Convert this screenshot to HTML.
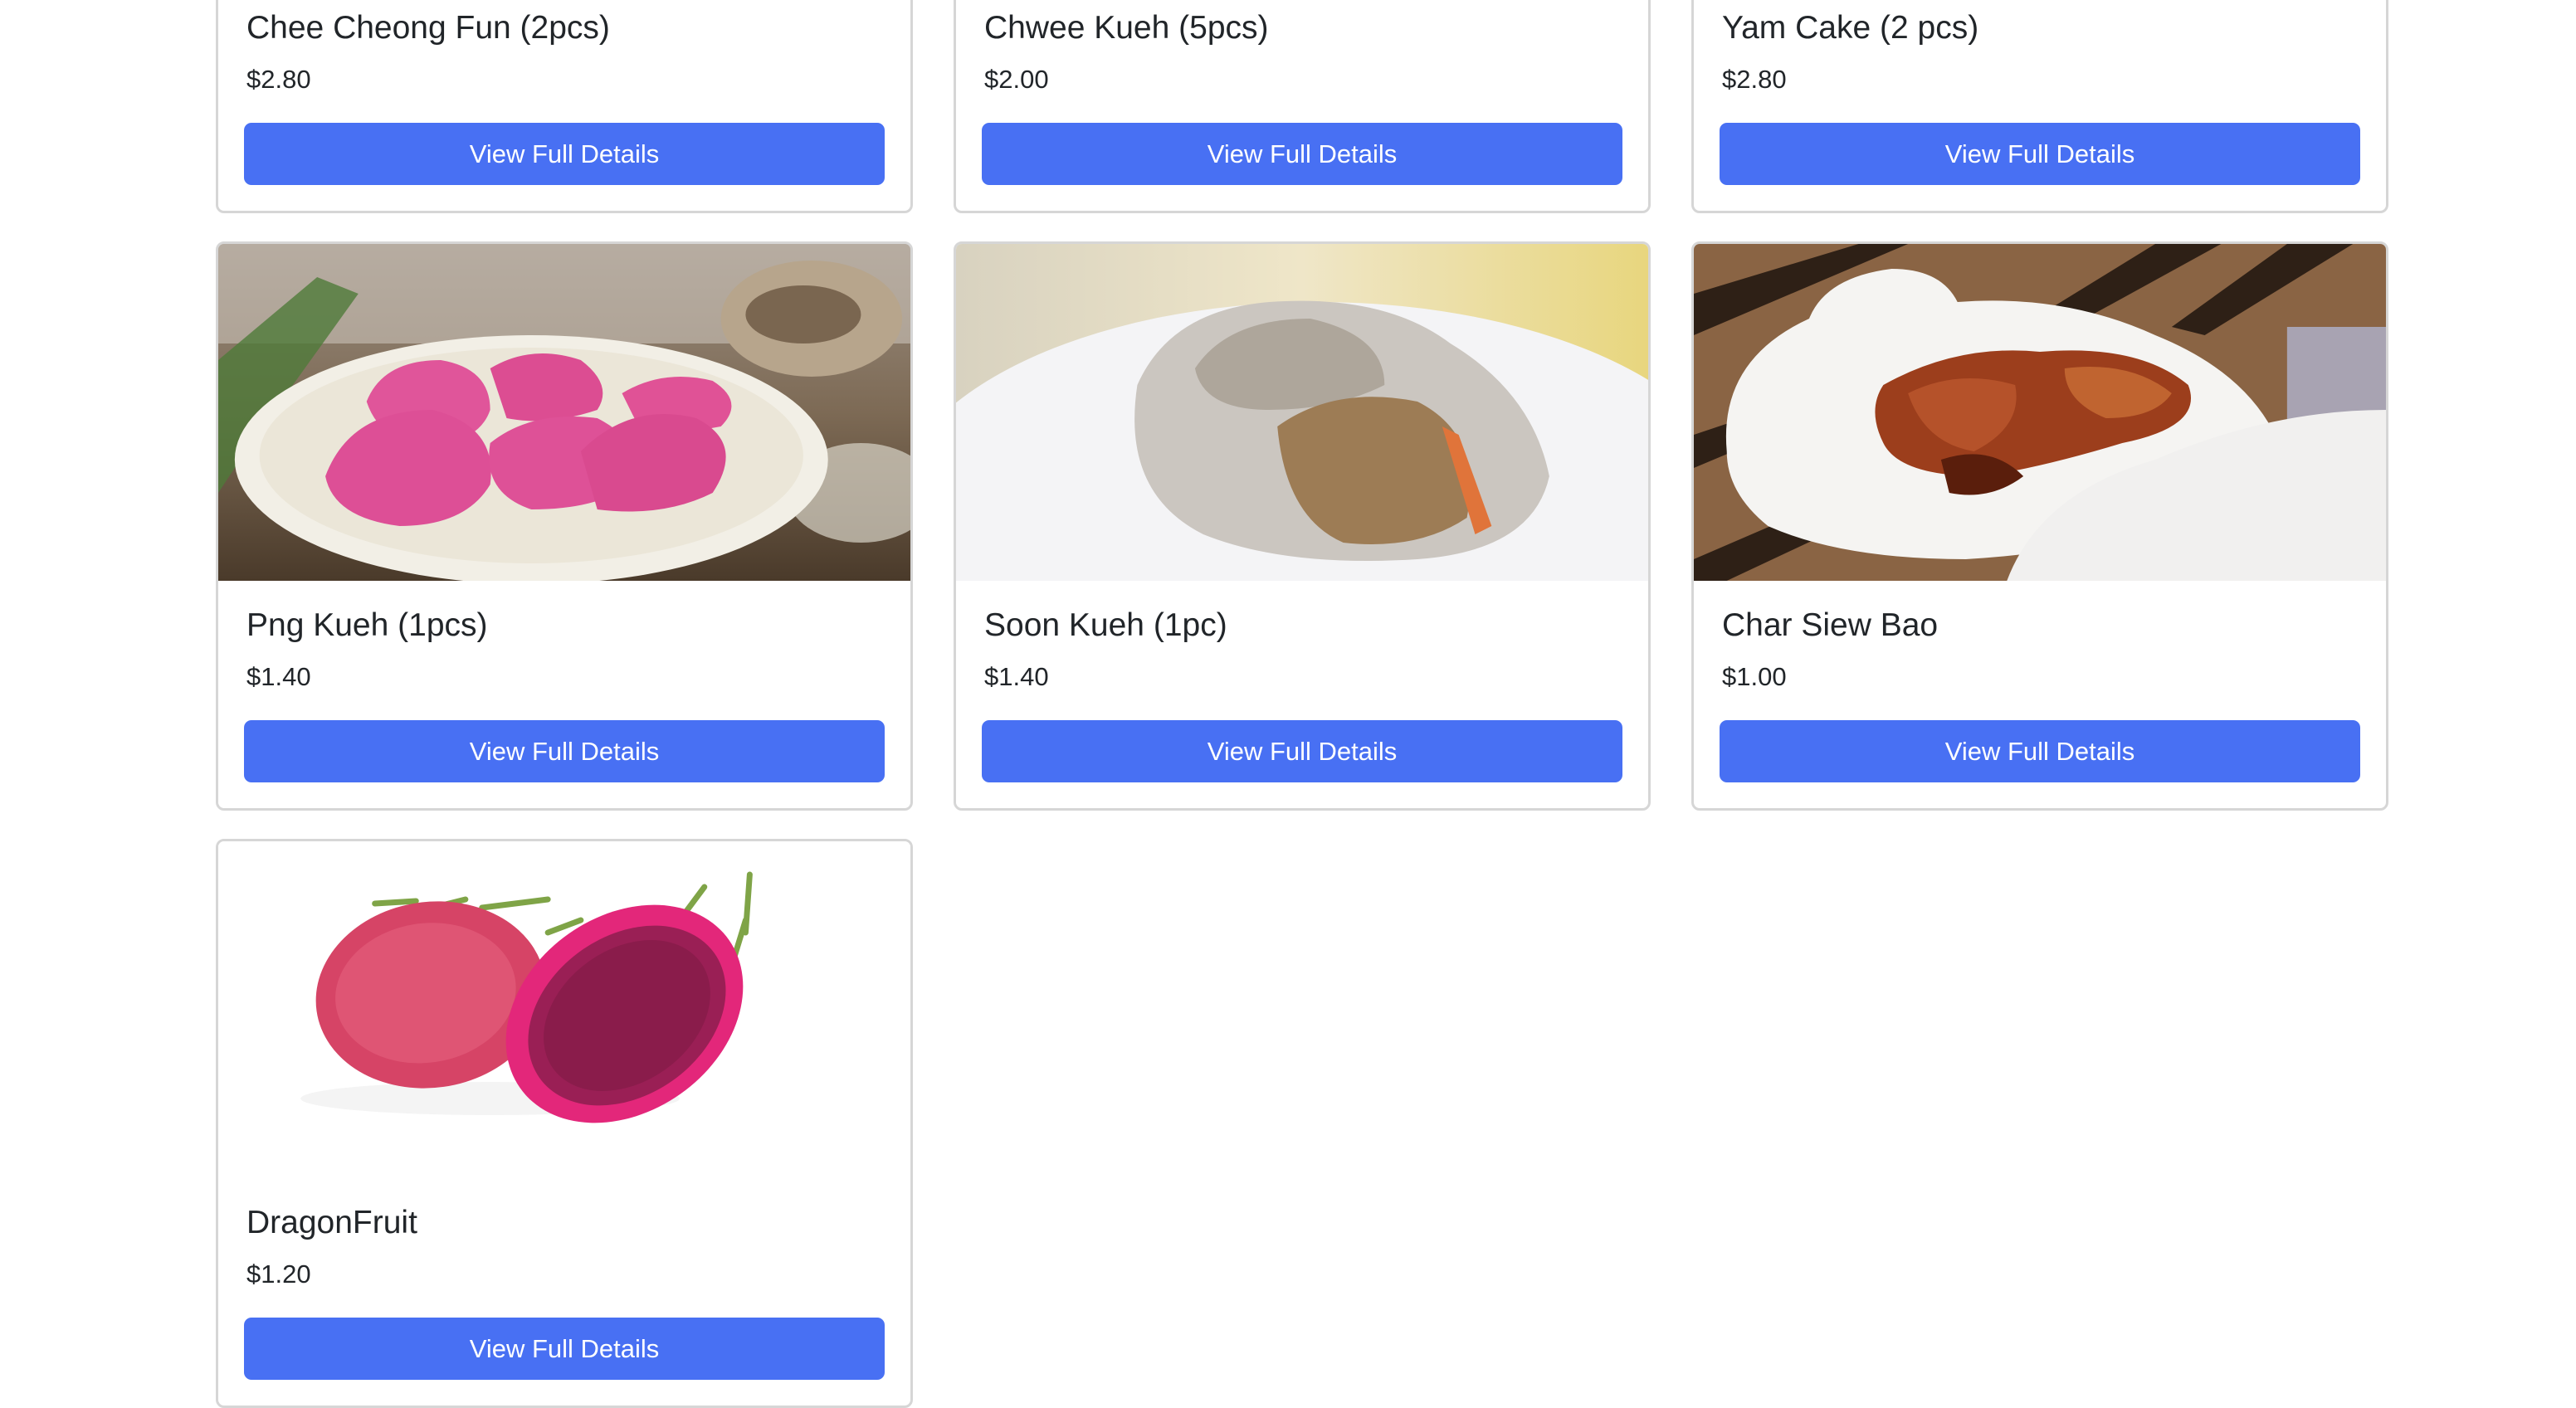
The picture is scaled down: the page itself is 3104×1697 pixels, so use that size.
<!DOCTYPE html>
<html><head><meta charset="utf-8"><style>
*{box-sizing:border-box;margin:0;padding:0}
html,body{width:3104px;height:1695px;overflow:hidden;background:#fff;font-family:"Liberation Sans",sans-serif;color:#212529}
.card{position:absolute;width:840px;height:686px;border:3px solid #d6d6d6;border-radius:10px;overflow:hidden;background:#fff}
.img{position:absolute;left:0;top:0;width:100%;height:406px}
.t{position:absolute;left:34px;top:440px;font-size:39px;line-height:40px;white-space:nowrap}
.p{position:absolute;left:34px;top:506px;font-size:31px;line-height:32px}
.b{position:absolute;left:31px;right:31px;top:574px;height:75px;background:#4870f3;border-radius:9px;color:#fff;font-size:31px;line-height:75px;text-align:center}
</style></head><body>

<div class="card" style="left:260px;top:-429px"><div class="t">Chee Cheong Fun (2pcs)</div><div class="p">$2.80</div><div class="b">View Full Details</div></div>
<div class="card" style="left:1149px;top:-429px"><div class="t">Chwee Kueh (5pcs)</div><div class="p">$2.00</div><div class="b">View Full Details</div></div>
<div class="card" style="left:2038px;top:-429px"><div class="t">Yam Cake (2 pcs)</div><div class="p">$2.80</div><div class="b">View Full Details</div></div>

<div class="card" style="left:260px;top:291px">
<svg class="img" viewBox="0 0 840 406" preserveAspectRatio="none">
<defs><linearGradient id="g1" x1="0" y1="0" x2="0" y2="1"><stop offset="0" stop-color="#9a8d80"/><stop offset=".5" stop-color="#7d6a55"/><stop offset="1" stop-color="#4a3a2a"/></linearGradient></defs>
<rect width="840" height="406" fill="url(#g1)"/>
<rect x="0" y="0" width="840" height="120" fill="#c9c2b8" opacity=".6"/>
<path d="M0 140 L120 40 L170 60 L40 240 L0 300Z" fill="#4f7a3a" opacity=".8"/>
<ellipse cx="720" cy="90" rx="110" ry="70" fill="#b7a58c"/><ellipse cx="710" cy="85" rx="70" ry="35" fill="#7a6650"/>
<ellipse cx="780" cy="300" rx="90" ry="60" fill="#d9d4c8" opacity=".7"/>
<ellipse cx="380" cy="260" rx="360" ry="150" fill="#f2efe6"/>
<ellipse cx="380" cy="255" rx="330" ry="130" fill="#ebe6d8"/>
<path d="M180 190 Q200 140 270 140 Q330 150 330 200 Q320 230 280 240 Q200 250 180 190Z" fill="#e0559a"/>
<path d="M330 150 Q380 120 440 140 Q480 170 460 200 Q400 220 350 210Z" fill="#dc4d92"/>
<path d="M490 180 Q540 150 600 165 Q640 190 610 220 Q560 230 510 220Z" fill="#e05296"/>
<path d="M130 280 Q160 200 260 200 Q340 220 330 290 Q300 340 220 340 Q140 330 130 280Z" fill="#dd4f96"/>
<path d="M330 240 Q380 200 460 210 Q520 240 500 290 Q460 320 380 320 Q320 300 330 240Z" fill="#de5197"/>
<path d="M440 250 Q500 190 580 210 Q640 240 600 300 Q540 330 460 320Z" fill="#d94a8f"/>
</svg>
<div class="t">Png Kueh (1pcs)</div><div class="p">$1.40</div><div class="b">View Full Details</div></div>

<div class="card" style="left:1149px;top:291px">
<svg class="img" viewBox="0 0 840 406" preserveAspectRatio="none">
<defs><linearGradient id="g2" x1="0" y1="0" x2="1" y2="0"><stop offset="0" stop-color="#d8d2c0"/><stop offset=".5" stop-color="#efe6c8"/><stop offset="1" stop-color="#e8d67e"/></linearGradient></defs>
<rect width="840" height="406" fill="url(#g2)"/>
<ellipse cx="440" cy="330" rx="520" ry="260" fill="#f4f4f6"/>
<path d="M220 170 Q260 80 380 70 Q520 60 600 120 Q700 180 720 280 Q700 370 560 380 Q400 390 300 350 Q200 300 220 170Z" fill="#cbc6c0"/>
<path d="M290 150 Q330 90 430 90 Q520 110 520 170 Q460 200 380 200 Q300 200 290 150Z" fill="#aea69b"/>
<path d="M390 220 Q460 170 560 190 Q640 230 620 330 Q560 370 470 360 Q400 330 390 220Z" fill="#9d7c55"/>
<path d="M590 220 L610 230 L650 340 L630 350Z" fill="#e0743a"/>
</svg>
<div class="t">Soon Kueh (1pc)</div><div class="p">$1.40</div><div class="b">View Full Details</div></div>

<div class="card" style="left:2038px;top:291px">
<svg class="img" viewBox="0 0 840 406" preserveAspectRatio="none">
<rect width="840" height="406" fill="#8a6444"/>
<path d="M0 60 L200 0 L260 0 L0 110Z M0 230 L120 190 L120 220 L0 270Z M560 0 L640 0 L420 120 L380 110Z M720 0 L800 0 L620 110 L580 100Z M0 380 L140 320 L160 350 L40 406 L0 406Z" fill="#2e2016"/>
<rect x="720" y="100" width="120" height="130" fill="#a8a3b2"/>
<path d="M40 250 Q30 140 140 90 Q160 40 240 30 Q300 30 320 70 Q450 60 560 110 Q660 150 700 220 Q690 290 620 320 Q500 370 330 380 Q180 380 90 340 Q40 300 40 250Z" fill="#f5f4f2"/>
<path d="M560 260 Q700 200 840 200 L840 406 L380 406 Q420 300 560 260Z" fill="#f1f0ef"/>
<path d="M230 170 Q320 120 420 130 Q540 120 600 170 Q620 220 520 240 Q420 270 350 280 Q250 280 230 240 Q210 200 230 170Z" fill="#9c3e1c"/>
<path d="M260 180 Q320 150 390 170 Q400 220 340 250 Q280 240 260 180Z" fill="#b5522a"/>
<path d="M450 150 Q530 140 580 180 Q560 210 500 210 Q450 190 450 150Z" fill="#c06430"/>
<path d="M300 260 Q360 240 400 280 Q360 310 310 300Z" fill="#5a1e0c"/>
</svg>
<div class="t">Char Siew Bao</div><div class="p">$1.00</div><div class="b">View Full Details</div></div>

<div class="card" style="left:260px;top:1011px">
<svg class="img" viewBox="0 0 840 406" preserveAspectRatio="none">
<rect width="840" height="406" fill="#fff"/>
<ellipse cx="330" cy="310" rx="230" ry="20" fill="#f0f0f0" opacity=".7"/>
<g stroke="#7fa447" stroke-width="7" fill="none" stroke-linecap="round">
<path d="M190 75 L240 72 M260 80 L300 70 M320 80 L400 70 M150 130 L180 125 M400 110 L440 95 M560 95 L590 55 M640 110 L645 40 M620 160 L640 95"/></g>
<ellipse cx="258" cy="185" rx="140" ry="112" fill="#d64466" transform="rotate(-8 258 185)"/>
<ellipse cx="252" cy="182" rx="110" ry="84" fill="#df5574" transform="rotate(-8 258 185)"/>
<ellipse cx="493" cy="208" rx="155" ry="118" fill="#e3277a" transform="rotate(-35 493 208)"/>
<ellipse cx="496" cy="210" rx="130" ry="96" fill="#9a1f55" transform="rotate(-35 496 210)"/>
<ellipse cx="496" cy="210" rx="110" ry="80" fill="#7d1a44" opacity=".55" transform="rotate(-35 496 210)"/>
</svg>
<div class="t">DragonFruit</div><div class="p">$1.20</div><div class="b">View Full Details</div></div>

</body></html>
